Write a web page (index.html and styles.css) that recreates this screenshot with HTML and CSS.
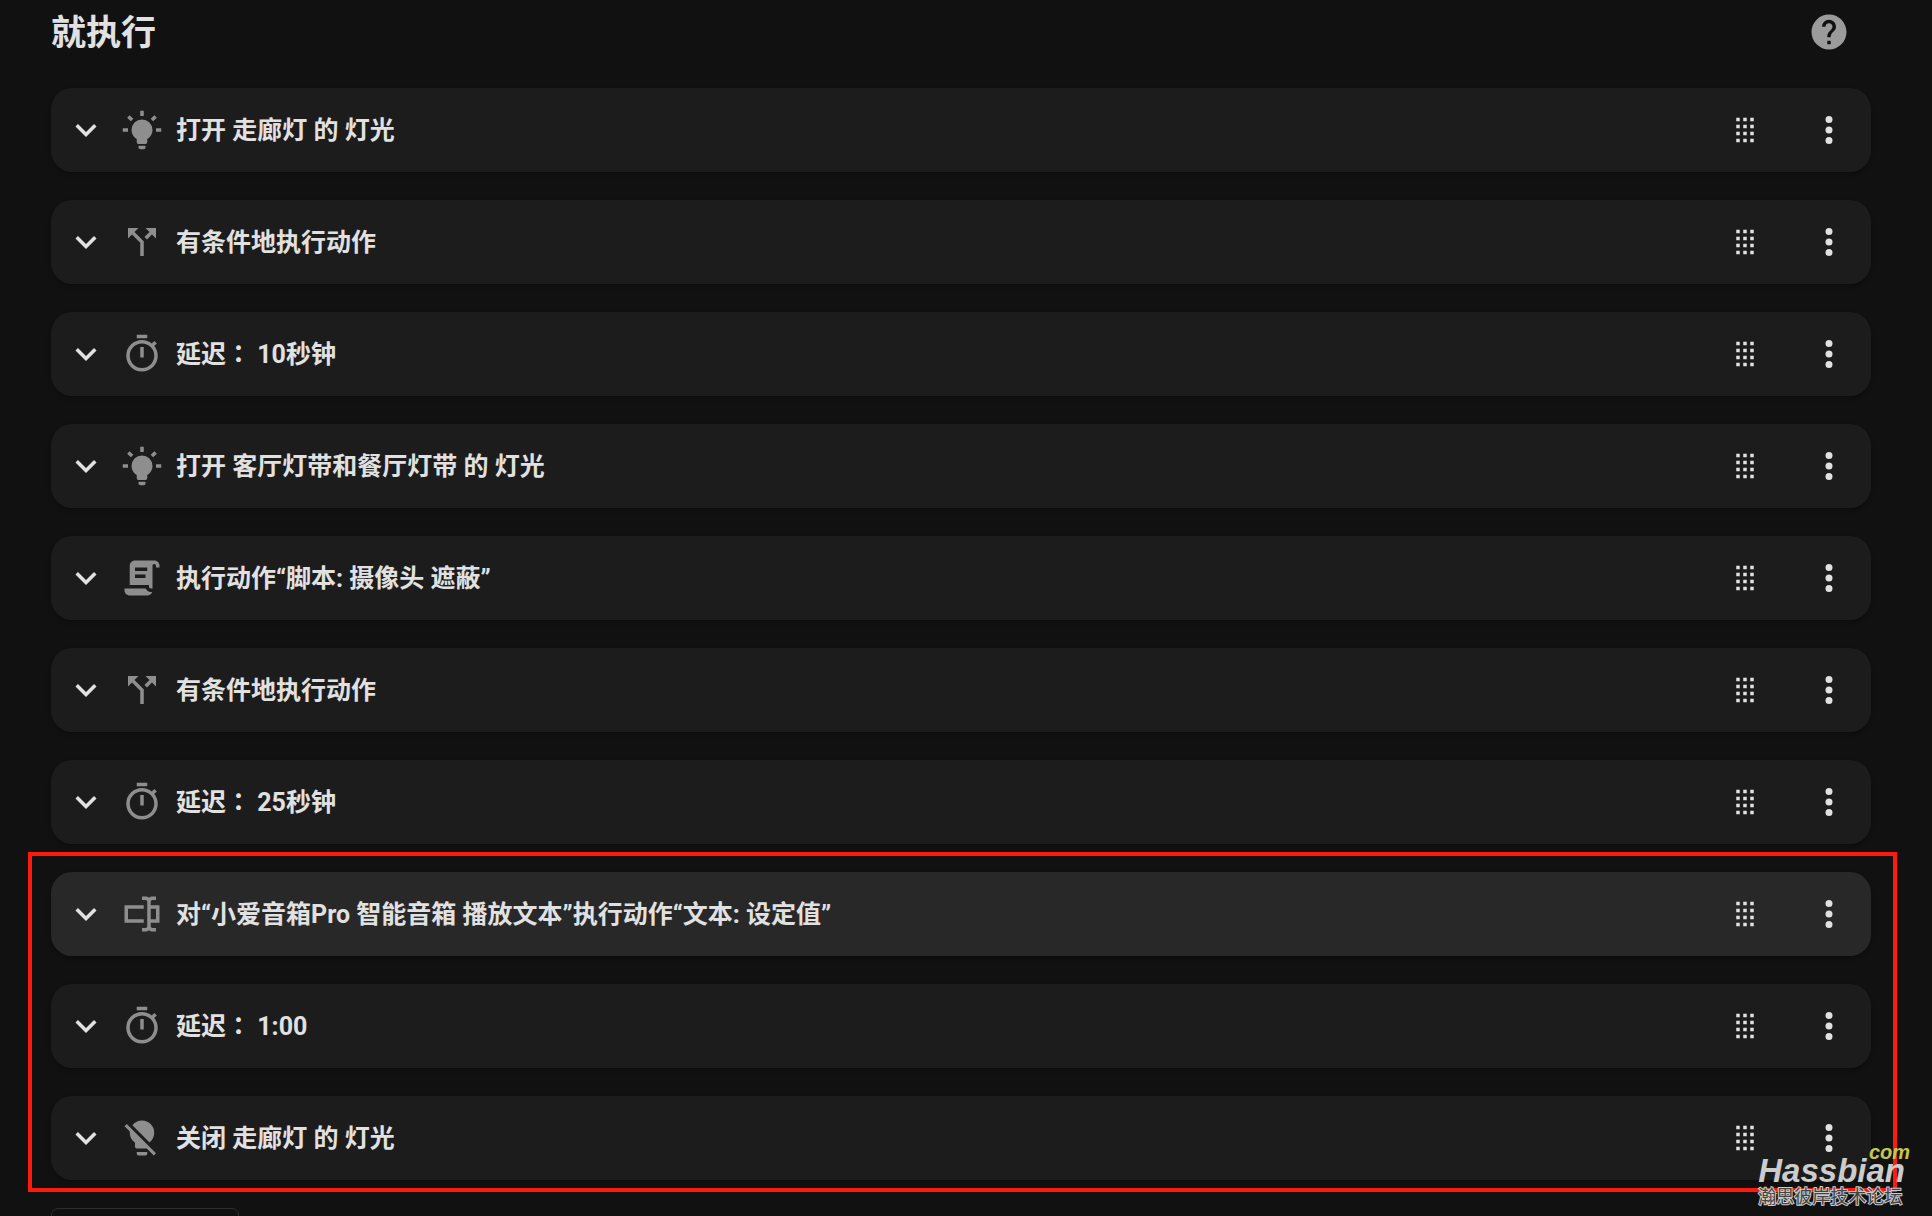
FILE: index.html
```html
<!DOCTYPE html>
<html lang="zh-CN">
<head>
  <meta charset="UTF-8" />
  <meta name="viewport" content="width=device-width, initial-scale=1.0" />
  <title>就执行</title>
  <link rel="stylesheet" href="styles.css">
</head>
<body>

  <!-- Icon set -->
  <svg class="icon-set" aria-hidden="true">
    <symbol id="chevron" viewBox="0 0 24 24"><path d="M7.41,8.58L12,13.17L16.59,8.58L18,10L12,16L6,10L7.41,8.58Z"/></symbol>
    <symbol id="light-on" viewBox="0 0 24 24"><path d="M12,6A6,6 0 0,1 18,12C18,14.22 16.79,16.16 15,17.2V19A1,1 0 0,1 14,20H10A1,1 0 0,1 9,19V17.2C7.21,16.16 6,14.22 6,12A6,6 0 0,1 12,6M14,21V22A1,1 0 0,1 13,23H11A1,1 0 0,1 10,22V21H14M20,11H23V13H20V11M1,11H4V13H1V11M13,1V4H11V1H13M4.92,3.5L7.05,5.64L5.63,7.05L3.5,4.93L4.92,3.5M16.95,5.63L19.07,3.5L20.5,4.93L18.37,7.05L16.95,5.63Z"/></symbol>
    <symbol id="light-off" viewBox="0 0 24 24"><path d="M12,2C9.76,2 7.78,3.05 6.5,4.68L16.31,14.5C17.94,13.21 19,11.24 19,9A7,7 0 0,0 12,2M3.28,4L2,5.27L5.04,8.3C5,8.53 5,8.76 5,9C5,11.38 6.19,13.47 8,14.74V17A1,1 0 0,0 9,18H14.73L18.73,22L20,20.72L3.28,4M9,20V21A1,1 0 0,0 10,22H14A1,1 0 0,0 15,21V20H9Z"/></symbol>
    <symbol id="split" viewBox="0 0 24 24"><path d="M14,4L16.29,6.29L13.41,9.17L14.83,10.59L17.71,7.71L20,10V4M10,4H4V10L6.29,7.71L11,12.41V20H13V11.59L7.71,6.29"/></symbol>
    <symbol id="timer" viewBox="0 0 24 24"><path d="M12,20A7,7 0 0,1 5,13A7,7 0 0,1 12,6A7,7 0 0,1 19,13A7,7 0 0,1 12,20M19.03,7.39L20.45,5.97C20,5.46 19.55,5 19.04,4.56L17.62,6C16.07,4.74 14.12,4 12,4A9,9 0 0,0 3,13A9,9 0 0,0 12,22C17,22 21,17.97 21,13C21,10.88 20.26,8.93 19.03,7.39M11,14H13V8H11M15,1H9V3H15V1Z"/></symbol>
    <symbol id="script" viewBox="0 0 24 24"><path d="M17.8,20C17.4,21.2 16.3,22 15,22H5C3.3,22 2,20.7 2,19V18H5L14.2,18C14.6,19.2 15.7,20 17,20H17.8M19,2C20.7,2 22,3.3 22,5V6H20V5C20,4.4 19.6,4 19,4C18.4,4 18,4.4 18,5V18H17C16.4,18 16,17.6 16,17V16H5V5C5,3.3 6.3,2 8,2H19M8,6V8H15V6H8M8,10V12H14V10H8Z"/></symbol>
    <symbol id="textbox" viewBox="0 0 24 24"><path d="M17,7H22V17H17V19A1,1 0 0,0 18,20H20V22H17.5C16.95,22 16,21.55 16,21C16,21.55 15.05,22 14.5,22H12V20H14A1,1 0 0,0 15,19V5A1,1 0 0,0 14,4H12V2H14.5C15.05,2 16,2.45 16,3C16,2.45 16.95,2 17.5,2H20V4H18A1,1 0 0,0 17,5V7M2,7H13V9H4V15H13V17H2V7M20,15V9H17V15H20Z"/></symbol>
    <symbol id="drag" viewBox="0 0 24 24"><path d="M7,19V17H9V19H7M11,19V17H13V19H11M15,19V17H17V19H15M7,15V13H9V15H7M11,15V13H13V15H11M15,15V13H17V15H15M7,11V9H9V11H7M11,11V9H13V11H11M15,11V9H17V11H15M7,7V5H9V7H7M11,7V5H13V7H11M15,7V5H17V7H15Z"/></symbol>
    <symbol id="dots" viewBox="0 0 24 24"><path d="M12,16A2,2 0 0,1 14,18A2,2 0 0,1 12,20A2,2 0 0,1 10,18A2,2 0 0,1 12,16M12,10A2,2 0 0,1 14,12A2,2 0 0,1 12,14A2,2 0 0,1 10,12A2,2 0 0,1 12,10M12,4A2,2 0 0,1 14,6A2,2 0 0,1 12,8A2,2 0 0,1 10,6A2,2 0 0,1 12,4Z"/></symbol>
    <symbol id="help" viewBox="0 0 24 24"><path d="M15.07,11.25L14.17,12.17C13.45,12.89 13,13.5 13,15H11V14.5C11,13.39 11.45,12.39 12.17,11.67L13.41,10.41C13.78,10.05 14,9.55 14,9C14,7.89 13.1,7 12,7A2,2 0 0,0 10,9H8A4,4 0 0,1 12,5A4,4 0 0,1 16,9C16,9.88 15.64,10.67 15.07,11.25M13,19H11V17H13M12,2A10,10 0 0,0 2,12A10,10 0 0,0 12,22A10,10 0 0,0 22,12C22,6.47 17.5,2 12,2Z"/></symbol>
  </svg>

  <main class="actions">
    <header class="actions-header">
      <h2>就执行</h2>
      <a href="#help" class="icon-button help" aria-label="帮助"><svg class="icon"><use href="#help"/></svg></a>
    </header>

    <div class="action-list">
      <div class="card">
        <button class="icon-button" aria-label="展开"><svg class="icon"><use href="#chevron"/></svg></button>
        <svg class="icon type-icon"><use href="#light-on"/></svg>
        <h3>打开 走廊灯 的 灯光</h3>
        <button class="icon-button" aria-label="移动"><svg class="icon"><use href="#drag"/></svg></button>
        <button class="icon-button" aria-label="菜单"><svg class="icon"><use href="#dots"/></svg></button>
      </div>

      <div class="card">
        <button class="icon-button" aria-label="展开"><svg class="icon"><use href="#chevron"/></svg></button>
        <svg class="icon type-icon"><use href="#split"/></svg>
        <h3>有条件地执行动作</h3>
        <button class="icon-button" aria-label="移动"><svg class="icon"><use href="#drag"/></svg></button>
        <button class="icon-button" aria-label="菜单"><svg class="icon"><use href="#dots"/></svg></button>
      </div>

      <div class="card">
        <button class="icon-button" aria-label="展开"><svg class="icon"><use href="#chevron"/></svg></button>
        <svg class="icon type-icon"><use href="#timer"/></svg>
        <h3>延迟<span class="colon" lang="zh-TW">：</span> 10秒钟</h3>
        <button class="icon-button" aria-label="移动"><svg class="icon"><use href="#drag"/></svg></button>
        <button class="icon-button" aria-label="菜单"><svg class="icon"><use href="#dots"/></svg></button>
      </div>

      <div class="card">
        <button class="icon-button" aria-label="展开"><svg class="icon"><use href="#chevron"/></svg></button>
        <svg class="icon type-icon"><use href="#light-on"/></svg>
        <h3>打开 客厅灯带和餐厅灯带 的 灯光</h3>
        <button class="icon-button" aria-label="移动"><svg class="icon"><use href="#drag"/></svg></button>
        <button class="icon-button" aria-label="菜单"><svg class="icon"><use href="#dots"/></svg></button>
      </div>

      <div class="card">
        <button class="icon-button" aria-label="展开"><svg class="icon"><use href="#chevron"/></svg></button>
        <svg class="icon type-icon"><use href="#script"/></svg>
        <h3>执行动作“脚本: 摄像头 遮蔽”</h3>
        <button class="icon-button" aria-label="移动"><svg class="icon"><use href="#drag"/></svg></button>
        <button class="icon-button" aria-label="菜单"><svg class="icon"><use href="#dots"/></svg></button>
      </div>

      <div class="card">
        <button class="icon-button" aria-label="展开"><svg class="icon"><use href="#chevron"/></svg></button>
        <svg class="icon type-icon"><use href="#split"/></svg>
        <h3>有条件地执行动作</h3>
        <button class="icon-button" aria-label="移动"><svg class="icon"><use href="#drag"/></svg></button>
        <button class="icon-button" aria-label="菜单"><svg class="icon"><use href="#dots"/></svg></button>
      </div>

      <div class="card">
        <button class="icon-button" aria-label="展开"><svg class="icon"><use href="#chevron"/></svg></button>
        <svg class="icon type-icon"><use href="#timer"/></svg>
        <h3>延迟<span class="colon" lang="zh-TW">：</span> 25秒钟</h3>
        <button class="icon-button" aria-label="移动"><svg class="icon"><use href="#drag"/></svg></button>
        <button class="icon-button" aria-label="菜单"><svg class="icon"><use href="#dots"/></svg></button>
      </div>

      <!-- Marked actions -->
      <div class="marked">
        <div class="card hovered">
          <button class="icon-button" aria-label="展开"><svg class="icon"><use href="#chevron"/></svg></button>
          <svg class="icon type-icon"><use href="#textbox"/></svg>
          <h3>对“小爱音箱Pro 智能音箱 播放文本”执行动作“文本: 设定值”</h3>
          <button class="icon-button" aria-label="移动"><svg class="icon"><use href="#drag"/></svg></button>
          <button class="icon-button" aria-label="菜单"><svg class="icon"><use href="#dots"/></svg></button>
        </div>

        <div class="card">
          <button class="icon-button" aria-label="展开"><svg class="icon"><use href="#chevron"/></svg></button>
          <svg class="icon type-icon"><use href="#timer"/></svg>
          <h3>延迟<span class="colon" lang="zh-TW">：</span> 1:00</h3>
          <button class="icon-button" aria-label="移动"><svg class="icon"><use href="#drag"/></svg></button>
          <button class="icon-button" aria-label="菜单"><svg class="icon"><use href="#dots"/></svg></button>
        </div>

        <div class="card">
          <button class="icon-button" aria-label="展开"><svg class="icon"><use href="#chevron"/></svg></button>
          <svg class="icon type-icon"><use href="#light-off"/></svg>
          <h3>关闭 走廊灯 的 灯光</h3>
          <button class="icon-button" aria-label="移动"><svg class="icon"><use href="#drag"/></svg></button>
          <button class="icon-button" aria-label="菜单"><svg class="icon"><use href="#dots"/></svg></button>
        </div>
        <div class="marker"></div>
      </div>

      <button class="add-button" aria-label="添加动作"></button>
    </div>
  </main>

  <!-- Forum watermark -->
  <div class="watermark">
    <span class="watermark-com">com</span>
    <span class="watermark-name">Hassbian</span>
    <span class="watermark-forum">瀚思彼岸技术论坛</span>
  </div>

</body>
</html>
```
FILE: styles.css
```css
* {
  margin: 0;
  padding: 0;
  box-sizing: border-box;
}

body {
  position: relative;
  height: 100vh;
  overflow: hidden;
  background-color: #111111;
  color: #e1e1e1;
  font-family: Roboto, "Noto Sans CJK SC", sans-serif;
}

.icon-set {
  display: none;
}

.icon {
  display: block;
  flex: none;
  width: 42px;
  height: 42px;
  fill: currentColor;
}

.icon-button {
  flex: none;
  background: none;
  border: none;
  color: inherit;
  cursor: pointer;
}

/* Section */
.actions {
  padding: 0 61px 0 51px;
}

.actions-header {
  display: flex;
  align-items: center;
  justify-content: space-between;
  height: 64px;
  margin-bottom: 24px;
  padding-right: 21px;
}

.actions-header h2 {
  padding-top: 4px;
  font-size: 35px;
  font-weight: 700;
  line-height: 48px;
}

.help {
  color: #9b9b9b;
}

.action-list,
.marked {
  display: flex;
  flex-direction: column;
  gap: 28px;
}

/* Action card */
.card {
  display: flex;
  align-items: center;
  height: 84px;
  padding: 0 21px 0 14px;
  background-color: #1c1c1c;
  border-radius: 21px;
  box-shadow: 0 2px 4px rgba(0, 0, 0, 0.3);
}

.card.hovered {
  background-color: #282828;
}

.card h3 {
  flex: 1;
  margin: 0 42px 0 13px;
  padding-top: 2px;
  font-size: 25px;
  font-weight: 700;
  line-height: 36px;
}

.card .icon-button:last-child {
  margin-left: 42px;
}

/* the TC face centres the full-width colon */
.colon {
  font-family: "Noto Sans CJK TC", sans-serif;
  line-height: 1;
}

.type-icon {
  margin-left: 14px;
  color: #8e8e8e;
}

/* Red marker around the last actions */
.marked {
  position: relative;
}

.marker {
  position: absolute;
  inset: -20px -26px -12px -23px;
  border: 4px solid #ff1a0d;
  pointer-events: none;
}

.add-button {
  width: 188px;
  height: 63px;
  background: none;
  border: 1px solid #2d2d2d;
  border-radius: 7px;
}

/* Watermark */
.watermark {
  position: absolute;
  right: 22px;
  bottom: 7px;
  display: flex;
  flex-direction: column;
  padding-right: 5px;
  color: #cccccc;
  font-family: "Liberation Sans", "Noto Sans CJK SC", sans-serif;
}

.watermark-com {
  align-self: flex-end;
  margin-right: -5px;
  color: #c6c64a;
  font-size: 20px;
  font-style: italic;
  font-weight: 700;
  line-height: 10px;
}

.watermark-name {
  font-size: 33px;
  font-style: italic;
  font-weight: 700;
  line-height: 28px;
}

.watermark-forum {
  color: #444444;
  font-size: 18px;
  line-height: 24px;
  -webkit-text-stroke: 2px #cccccc;
  paint-order: stroke fill;
}
```
